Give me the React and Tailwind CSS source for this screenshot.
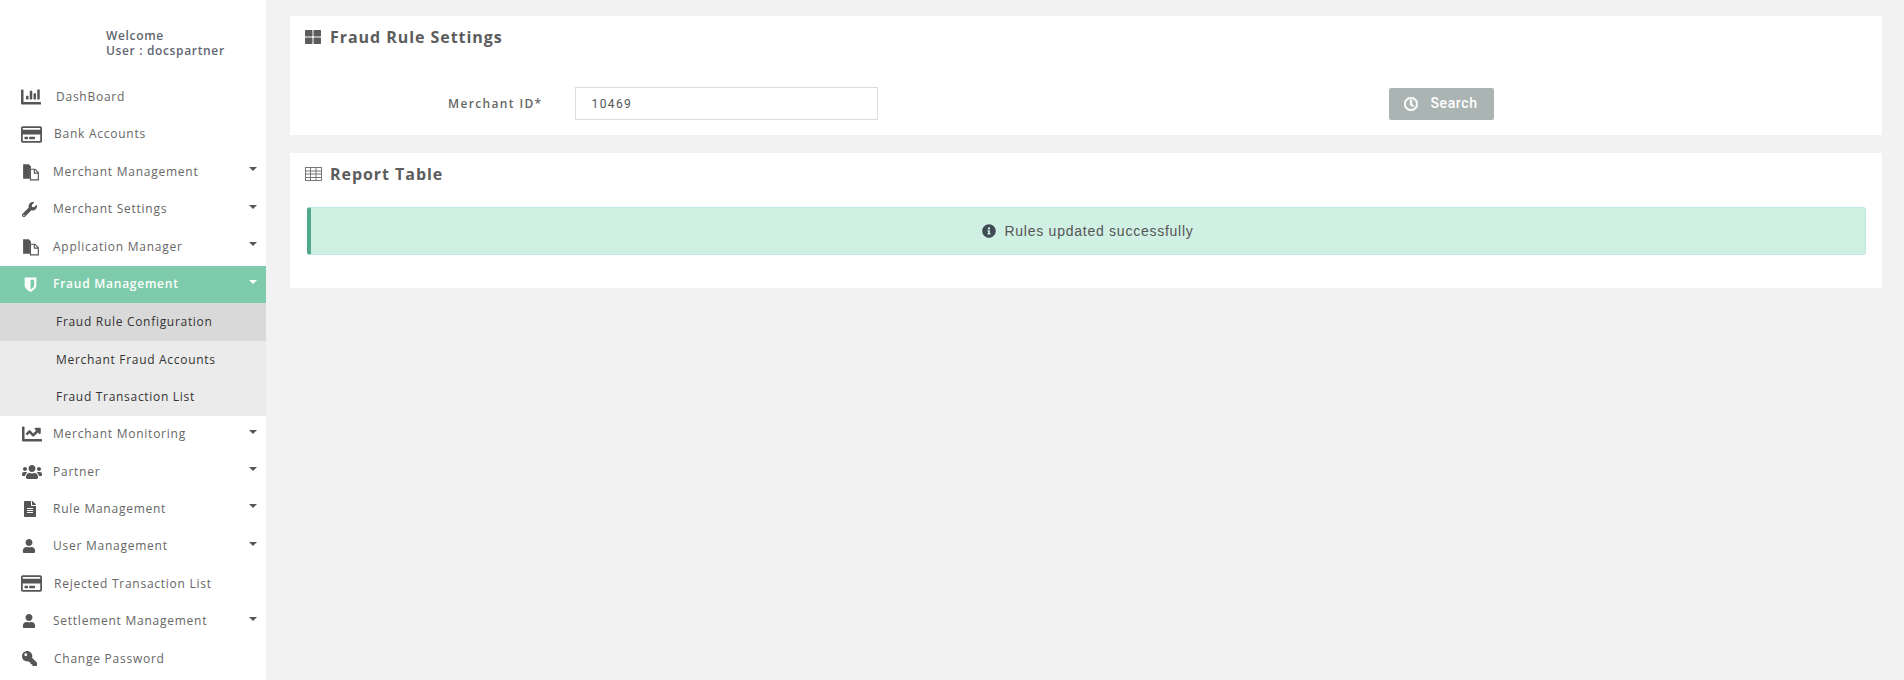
import React from "react";
import { FaChartBar, FaRegCreditCard, FaWrench, FaChartLine, FaUsers, FaFileAlt, FaUser, FaKey, FaThLarge, FaInfoCircle, FaRegClock } from "react-icons/fa";

const FilesIcon = ({ size = 18 }) => (
  <svg width={size} height={size} viewBox="0 0 16 16" fill="none">
    <path d="M1 1h5l2 2v2H7v9H1z" fill="currentColor" />
    <path d="M7.5 5.5h4l3 3v6.500h-7z" stroke="currentColor" strokeWidth="1" fill="#fff" />
    <path d="M11 5.500v3.500h3.500" stroke="currentColor" strokeWidth="1" />
  </svg>
);

const ShieldIcon = ({ size = 17 }) => (
  <svg width={size} height={size} viewBox="0 0 16 16" fill="none">
    <path d="M2.500 1.500h11v7c0 3-2.500 5-5.500 6.500-3-1.500-5.500-3.500-5.500-6.500z" fill="currentColor" />
    <path d="M8 3.500h3.500v5c0 1.800-1.500 3.100-3.500 4.200z" fill="#7dcbaa" />
  </svg>
);

const GridIcon = () => (
  <svg width="17" height="14" viewBox="0 0 17 14" fill="none" stroke="#777" strokeWidth="1">
    <rect x="0.5" y="0.500" width="16" height="13" />
    <path d="M0.500 4h16M0.500 7h16M0.500 10.500h16M5.500 1v12.500M11 1v12.500" />
  </svg>
);

const Caret = ({ white }) => (
  <span className={`ml-auto mr-[9px] mb-[5px] w-0 h-0 border-x-[4px] border-x-transparent border-t-[4px] ${white ? "border-t-white" : "border-t-[#555]"}`} />
);

const menu = [
  { label: "DashBoard", icon: <FaChartBar size={20} />, pad: "pl-[21px]", gap: "ml-[1px]" },
  { label: "Bank Accounts", icon: <FaRegCreditCard size={21} />, pad: "pl-[21px]", gap: "ml-[-1px]" },
  { label: "Merchant Management", icon: <FilesIcon />, arrow: true },
  { label: "Merchant Settings", icon: <FaWrench size={15} />, arrow: true },
  { label: "Application Manager", icon: <FilesIcon />, arrow: true },
  { label: "Fraud Management", icon: <ShieldIcon />, arrow: true, active: true },
  { label: "Fraud Rule Configuration", sub: true, current: true },
  { label: "Merchant Fraud Accounts", sub: true },
  { label: "Fraud Transaction List", sub: true },
  { label: "Merchant Monitoring", icon: <FaChartLine size={20} />, arrow: true },
  { label: "Partner", icon: <FaUsers size={20} />, arrow: true },
  { label: "Rule Management", icon: <FaFileAlt size={16} />, arrow: true },
  { label: "User Management", icon: <FaUser size={14} />, arrow: true },
  { label: "Rejected Transaction List", icon: <FaRegCreditCard size={21} />, pad: "pl-[21px]", gap: "ml-[-1px]" },
  { label: "Settlement Management", icon: <FaUser size={14} />, arrow: true },
  { label: "Change Password", icon: <FaKey size={15} className="-scale-x-100" />, gap: "ml-[1px]" },
];

const MenuRow = ({ item }) => {
  if (item.sub) {
    return (
      <div className={`h-[37.47px] flex items-center pl-[56px] text-[12px] tracking-[0.7px] text-[#333] ${item.current ? "bg-[#d9d9d9]" : "bg-[#ebebeb]"}`}>
        {item.label}
      </div>
    );
  }
  return (
    <div className={`h-[37.47px] pb-[1px] flex items-center text-[12px] tracking-[0.75px] ${item.pad || "pl-[22px]"} ${item.active ? "bg-[#7dcbaa] text-white font-semibold" : "text-[#666]"}`}>
      <span className={`${item.pad ? "w-[34px]" : "w-[31px]"} shrink-0 flex items-center ${item.active ? "text-white" : "text-[#555]"}`}>{item.icon}</span>
      <span className={item.gap}>{item.label}</span>
      {item.arrow && <Caret white={item.active} />}
    </div>
  );
};

export default function App() {
  return (
    <div className="flex w-[1904px] h-[680px] overflow-hidden bg-[#f2f2f2] font-['Open_Sans',sans-serif]">
      {/* sidebar */}
      <aside className="w-[266px] shrink-0 bg-white">
        <div className="h-[78.6px] pt-[28px] pl-[106px] text-[12px] leading-[15px] font-semibold tracking-[0.65px] text-[#5f6672]">
          <p>Welcome</p>
          <p>User : docspartner</p>
        </div>
        {menu.map((m) => (
          <MenuRow key={m.label} item={m} />
        ))}
      </aside>

      {/* main */}
      <main className="flex-1 pl-[24px] pr-[22px] pt-[16px]">
        <section className="bg-white h-[119px] px-[15px]">
          <div className="h-[41px] flex items-center text-[#5c5c5c]">
            <FaThLarge size={16} />
            <h2 className="ml-[9px] text-[16px] font-bold tracking-[0.95px]">Fraud Rule Settings</h2>
          </div>
          <div className="mt-[30px] flex items-center">
            <label className="w-[269.5px] pr-[32px] text-right text-[12px] font-semibold tracking-[1.35px] text-[#666]">Merchant ID*</label>
            <input
              readOnly
              value="10469"
              className="w-[303px] h-[33px] border border-[#ddd] px-[16px] text-[12px] text-[#555] font-['Roboto',sans-serif] tracking-[1.4px] outline-none"
            />
            <button className="ml-[511px] w-[105px] h-[32px] rounded-[2px] bg-[#a9b4b3] text-white text-[14px] font-medium font-['Roboto',sans-serif] tracking-[0.6px] flex items-center justify-center gap-[12px]">
              <FaRegClock size={14} stroke="currentColor" strokeWidth={30} />
              Search
            </button>
          </div>
        </section>

        <section className="mt-[18px] bg-white h-[135px] px-[15px]">
          <div className="h-[41px] flex items-center text-[#5c5c5c]">
            <GridIcon />
            <h2 className="ml-[8px] text-[16px] font-bold tracking-[0.95px]">Report Table</h2>
          </div>
          <div className="mt-[13px] ml-[2px] mr-[1px] h-[48px] rounded-[3px] border border-[#bfe9e6] border-l-[4px] border-l-[#4fa98a] bg-[#d1f0e4] flex items-center justify-center gap-[8px] text-[14px] text-[#555] font-['Liberation_Sans',sans-serif] tracking-[0.75px]">
            <FaInfoCircle size={14} className="text-[#3f4a55]" />
            Rules updated successfully
          </div>
        </section>
      </main>
    </div>
  );
}
